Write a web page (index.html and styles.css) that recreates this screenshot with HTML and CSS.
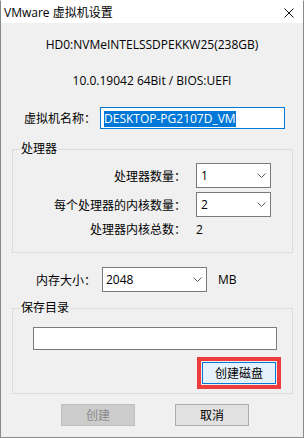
FILE: index.html
```html
<!DOCTYPE html>
<html lang="zh-CN">
<head>
    <meta charset="UTF-8">
    <title>VMware 虚拟机设置</title>
    <link rel="stylesheet" href="styles.css">
</head>
<body>

<div class="window">
    <div class="titlebar">
        <span>VMware 虚拟机设置</span>
        <svg class="close" width="10" height="10" viewBox="0 0 10 10">
            <path d="M0.5 0.5 L9.5 9.5 M9.5 0.5 L0.5 9.5" stroke="#111" stroke-width="1" fill="none"/>
        </svg>
    </div>

    <div class="content">
        <p class="info">HD0:NVMeINTELSSDPEKKW25(238GB)</p>
        <p class="info">10.0.19042 64Bit / BIOS:UEFI</p>

        <div class="field-row name-row">
            <span class="name-label">虚拟机名称：</span>
            <div class="textbox name-box"><span class="selection">DESKTOP-PG2107D_VM</span></div>
        </div>

        <fieldset class="group">
            <legend>处理器</legend>
            <div class="cpu-row">
                <span class="cpu-label">处理器数量：</span>
                <div class="combo cpu-combo">
                    <span>1</span>
                    <svg class="chevron" width="9" height="5" viewBox="0 0 9 5"><polyline points="0.5,0.5 4.5,4.5 8.5,0.5" stroke="#5a5a5a" fill="none"/></svg>
                </div>
            </div>
            <div class="cpu-row">
                <span class="cpu-label">每个处理器的内核数量：</span>
                <div class="combo cpu-combo">
                    <span>2</span>
                    <svg class="chevron" width="9" height="5" viewBox="0 0 9 5"><polyline points="0.5,0.5 4.5,4.5 8.5,0.5" stroke="#5a5a5a" fill="none"/></svg>
                </div>
            </div>
            <div class="cpu-row cpu-total">
                <span class="cpu-label">处理器内核总数：</span>
                <span>2</span>
            </div>
        </fieldset>

        <div class="field-row mem-row">
            <span class="mem-label">内存大小：</span>
            <div class="combo mem-combo">
                <span>2048</span>
                <svg class="chevron" width="9" height="5" viewBox="0 0 9 5"><polyline points="0.5,0.5 4.5,4.5 8.5,0.5" stroke="#5a5a5a" fill="none"/></svg>
            </div>
            <span class="unit">MB</span>
        </div>

        <fieldset class="group save-group">
            <legend>保存目录</legend>
            <div class="textbox path-box"></div>
            <button class="btn btn-disk">创建磁盘</button>
        </fieldset>

        <div class="actions">
            <button class="btn" disabled>创建</button>
            <button class="btn">取消</button>
        </div>
    </div>
</div>

</body>
</html>
```

FILE: styles.css
```css
body {
    margin: 0;
    font-family: "Open Sans", "Noto Sans CJK SC", sans-serif;
    font-size: 12px;
    color: #000;
}
.window {
    width: 304px;
    height: 438px;
    box-sizing: border-box;
    border: 1px solid #8a8a8a;
    border-top-color: #fff;
    background: #f0f0f0;
}
.titlebar {
    height: 22px;
    background: #fff;
    display: flex;
    align-items: center;
    justify-content: space-between;
    padding: 1px 9px 0 3px;
    box-sizing: border-box;
    line-height: 16px;
}
.content {
    padding-top: 14px;
}
.info {
    margin: 0;
    text-align: center;
    line-height: 16px;
}
.info + .info {
    margin-top: 20px;
}
.field-row {
    display: flex;
    align-items: center;
}
.name-row {
    margin-top: 18px;
    padding-left: 23px;
}
.name-label {
    width: 76px;
}
.textbox {
    box-sizing: border-box;
    border: 1px solid #7a7a7a;
    background: #fff;
}
.name-box {
    width: 185px;
    height: 22px;
    padding: 2px 3px;
    border-color: #0078d7;
}
.selection {
    display: inline-block;
    line-height: 16px;
    background: #0078d7;
    color: #fff;
}
.group {
    margin: 12px 10px 0 11px;
    padding: 6px 0 11px;
    border: 1px solid #dcdcdc;
}
.group legend {
    margin-left: 7px;
    padding: 0 1px;
    line-height: 16px;
}
.cpu-row {
    display: flex;
    align-items: center;
    height: 25px;
}
.cpu-row + .cpu-row {
    margin-top: 4px;
}
.cpu-total {
    height: 24px;
    margin-top: 0 !important;
}
.cpu-label {
    width: 173px;
    margin-right: 10px;
    text-align: right;
}
.combo {
    box-sizing: border-box;
    height: 25px;
    border: 1px solid #7a7a7a;
    background: #fff;
    display: flex;
    align-items: center;
    justify-content: space-between;
    padding: 0 4px 0 4px;
}
.cpu-combo {
    width: 75px;
}
.mem-row {
    margin-top: 14px;
    padding-left: 35px;
}
.mem-label {
    width: 66px;
}
.mem-combo {
    width: 105px;
    padding-left: 3px;
}
.unit {
    margin-left: 11px;
}
.save-group {
    margin-top: 8px;
    padding-top: 11px;
    padding-bottom: 9px;
}
.path-box {
    width: 244px;
    height: 23px;
    margin-left: 20px;
}
.btn {
    display: block;
    width: 74px;
    height: 22px;
    box-sizing: border-box;
    border: 1px solid #adadad;
    background: #e1e1e1;
    font-family: inherit;
    font-size: 12px;
    color: #000;
    padding: 0;
}
.btn:disabled {
    background: #cccccc;
    border-color: #bfbfbf;
    color: #8a8a8a;
}
.btn-disk {
    margin: 12px 0 0 189px;
    background: #e5f1fb;
    border-color: #0078d7;
    outline: 4px solid #ee3b3b;
    outline-offset: 1px;
}
.actions {
    display: flex;
    gap: 40px;
    margin-top: 10px;
    padding-left: 60px;
}
```
